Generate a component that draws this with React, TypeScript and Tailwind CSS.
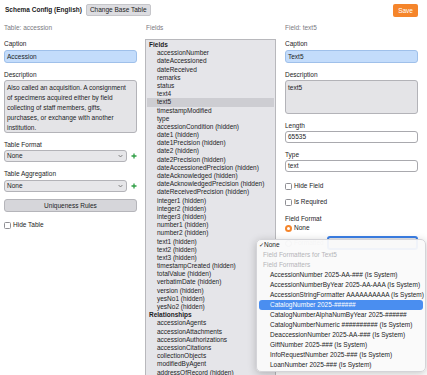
import React from "react";

const mainFields = [
  "accessionNumber",
  "dateAccessioned",
  "dateReceived",
  "remarks",
  "status",
  "text4",
  "text5",
  "timestampModified",
  "type",
];
const hiddenFields = [
  "accessionCondition",
  "date1",
  "date1Precision",
  "date2",
  "date2Precision",
  "dateAccessionedPrecision",
  "dateAcknowledged",
  "dateAcknowledgedPrecision",
  "dateReceivedPrecision",
  "integer1",
  "integer2",
  "integer3",
  "number1",
  "number2",
  "text1",
  "text2",
  "text3",
  "timestampCreated",
  "totalValue",
  "verbatimDate",
  "version",
  "yesNo1",
  "yesNo2",
];
const relationships = [
  "accessionAgents",
  "accessionAttachments",
  "accessionAuthorizations",
  "accessionCitations",
  "collectionObjects",
  "modifiedByAgent",
  "addressOfRecord (hidden)",
  "appraisals (hidden)",
];

const formatters: { name: string; sel?: boolean }[] = [
  { name: "AccessionNumber 2025-AA-### (Is System)" },
  { name: "AccessionNumberByYear 2025-AA-AAA (Is System)" },
  { name: "AccessionStringFormatter AAAAAAAAAA (Is System)" },
  { name: "CatalogNumber 2025-######", sel: true },
  { name: "CatalogNumberAlphaNumByYear 2025-######" },
  { name: "CatalogNumberNumeric ########## (Is System)" },
  { name: "DeaccessionNumber 2025-AA-### (Is System)" },
  { name: "GiftNumber 2025-### (Is System)" },
  { name: "InfoRequestNumber 2025-### (Is System)" },
  { name: "LoanNumber 2025-### (Is System)" },
];

function Label({ children, className = "" }: { children: React.ReactNode; className?: string }) {
  return <div className={`h-[8px] leading-[8px] whitespace-nowrap ${className}`}>{children}</div>;
}

function Chevron() {
  return (
    <svg width="5" height="4" viewBox="0 0 5 4" className="shrink-0">
      <path d="M0.6 1 L2.5 3 L4.4 1" fill="none" stroke="#6b6b6b" strokeWidth="0.8" />
    </svg>
  );
}

function Plus() {
  return (
    <svg width="6" height="6" viewBox="0 0 6 6" className="shrink-0">
      <path d="M3 0.5 V5.5 M0.5 3 H5.5" stroke="#2f9e44" strokeWidth="1.3" />
    </svg>
  );
}

function SelectRow({ className = "" }: { className?: string }) {
  return (
    <div className={`flex items-center ${className}`}>
      <div className="w-[123px] h-[12px] flex items-center justify-between pl-[2px] pr-[3px] bg-[#e6e6e9] border border-[#b3b3b8] rounded-[3px]">
        <span>None</span>
        <Chevron />
      </div>
      <div className="ml-[4px]">
        <Plus />
      </div>
    </div>
  );
}

function Checkbox({ label, className = "" }: { label: string; className?: string }) {
  return (
    <div className={`flex items-center h-[8px] gap-[2px] ${className}`}>
      <span className="w-[7px] h-[7px] bg-white border border-[#8f8f94] rounded-[1.5px]" />
      <span className="leading-[8px]">{label}</span>
    </div>
  );
}

export default function App() {
  return (
    <div className="relative w-[427px] h-[375px] overflow-hidden bg-white text-[#1c1c1e] text-[6.5px] leading-[8px] font-['Liberation_Sans',Arial,sans-serif]">
      {/* header */}
      <div className="flex items-center h-[20px] pl-[5px] pr-[9px]">
        <span className="font-bold">Schema Config (English)</span>
        <button className="ml-[4px] h-[12px] px-[3px] rounded-[2px] bg-[#dcdce0] border border-[#c6c6ca] leading-[10px]">
          Change Base Table
        </button>
        <div className="flex-1" />
        <button className="h-[13px] px-[5px] rounded-[2px] bg-[#f5852b] text-white leading-[13px]">Save</button>
      </div>

      <div className="flex pl-[4px]">
        {/* column 1 */}
        <div className="w-[133px] flex flex-col">
          <Label className="mt-[4px] text-[#7a7a7f]">Table: accession</Label>
          <Label className="mt-[8px]">Caption</Label>
          <div className="mt-[2px] h-[13px] flex items-center pl-[2px] bg-[#c3dcfb] border border-[#9fc0ea] rounded-[3px]">
            Accession
          </div>
          <Label className="mt-[8px]">Description</Label>
          <div className="mt-[1px] h-[53px] pl-[2px] pt-[2px] bg-[#e4e4e7] border border-[#b3b3b8] rounded-[3px] leading-[10px] whitespace-nowrap">
            <div>Also called an acquisition. A consignment</div>
            <div>of specimens acquired either by field</div>
            <div>collecting of staff members, gifts,</div>
            <div>purchases, or exchange with another</div>
            <div>institution.</div>
          </div>
          <Label className="mt-[8px]">Table Format</Label>
          <SelectRow className="mt-[1px]" />
          <Label className="mt-[8px]">Table Aggregation</Label>
          <SelectRow className="mt-[2px]" />
          <button className="mt-[7px] h-[13px] w-[133px] bg-[#d6d6da] border border-[#b5b5ba] rounded-[3px] leading-[11px] text-center">
            Uniqueness Rules
          </button>
          <Checkbox label="Hide Table" className="mt-[9px]" />
        </div>

        {/* column 2 */}
        <div className="w-[131px] ml-[8px] flex flex-col">
          <Label className="mt-[4px] ml-[1px] text-[#7a7a7f]">Fields</Label>
          <div className="mt-[7px] h-[340px] overflow-hidden bg-[#e5e5e9] border border-[#b8b8bc] px-[1px] pt-[1px] leading-[8.2px]">
            <div className="h-[8.2px] pl-[2px] font-bold">Fields</div>
            {mainFields.map((f) => (
              <div
                key={f}
                className={`h-[8.2px] pl-[10px] whitespace-nowrap ${f === "text5" ? "bg-[#cdcdd2]" : ""}`}
              >
                {f}
              </div>
            ))}
            {hiddenFields.map((f) => (
              <div key={f} className="h-[8.2px] pl-[10px] whitespace-nowrap">
                {f} (hidden)
              </div>
            ))}
            <div className="h-[8.2px] pl-[2px] font-bold">Relationships</div>
            {relationships.map((f) => (
              <div key={f} className="h-[8.2px] pl-[10px] whitespace-nowrap">
                {f}
              </div>
            ))}
          </div>
        </div>

        {/* column 3 */}
        <div className="w-[133px] ml-[9px] flex flex-col">
          <Label className="mt-[4px] text-[#7a7a7f]">Field: text5</Label>
          <Label className="mt-[8px]">Caption</Label>
          <div className="mt-[2px] h-[13px] flex items-center pl-[2px] bg-[#c3dcfb] border border-[#9fc0ea] rounded-[3px]">
            Text5
          </div>
          <Label className="mt-[8px]">Description</Label>
          <div className="mt-[1px] h-[34px] pl-[2px] pt-[2px] bg-[#e4e4e7] border border-[#b3b3b8] rounded-[3px] leading-[10px]">
            text5
          </div>
          <Label className="mt-[8px]">Length</Label>
          <div className="mt-[1px] h-[12px] flex items-center pl-[2px] bg-white border border-[#a9a9ae] rounded-[3px]">
            65535
          </div>
          <Label className="mt-[8px]">Type</Label>
          <div className="mt-[1px] h-[12px] flex items-center pl-[2px] bg-white border border-[#a9a9ae] rounded-[3px]">
            text
          </div>
          <Checkbox label="Hide Field" className="mt-[10px]" />
          <Checkbox label="Is Required" className="mt-[8px]" />
          <Label className="mt-[9px]">Field Format</Label>
          <div className="mt-[1px] flex items-center h-[8px] gap-[2px]">
            <span className="w-[7px] h-[7px] rounded-full bg-[#f5852b] flex items-center justify-center">
              <span className="w-[3px] h-[3px] rounded-full bg-white" />
            </span>
            <span>None</span>
          </div>
          <div className="mt-[4px] flex items-center h-[14px]">
            <span className="w-[7px] h-[7px] rounded-full bg-white border border-[#8f8f94]" />
            <span className="ml-[2px] text-[#9a9a9f]">Formatted</span>
            <div className="ml-auto w-[91px] h-[14px] border-[2px] border-[#3b7fe6] rounded-[3px] bg-[#e6e6e9]" />
          </div>
        </div>
      </div>

      {/* dropdown menu */}
      <div className="absolute left-[256px] top-[239px] w-[170px] pb-[1px] bg-[#fafafa]/95 border border-[#d4d4d8] rounded-[5px] shadow-[0_2px_8px_rgba(0,0,0,0.22)] leading-[10px] whitespace-nowrap">
        <div className="h-[10px] flex items-center pl-[2px]">
          <span className="w-[5px] text-[6px]">✓</span>
          <span>None</span>
        </div>
        <div className="h-[10px] pl-[6px] text-[#b4b4b8]">Field Formatters for Text5</div>
        <div className="h-[10px] pl-[6px] text-[#b4b4b8]">Field Formatters</div>
        {formatters.map((f) => (
          <div
            key={f.name}
            className={`h-[10px] mx-[2px] pl-[11px] rounded-[3px] ${f.sel ? "bg-[#4a8ef0] text-white" : ""}`}
          >
            {f.name}
          </div>
        ))}
      </div>
    </div>
  );
}
